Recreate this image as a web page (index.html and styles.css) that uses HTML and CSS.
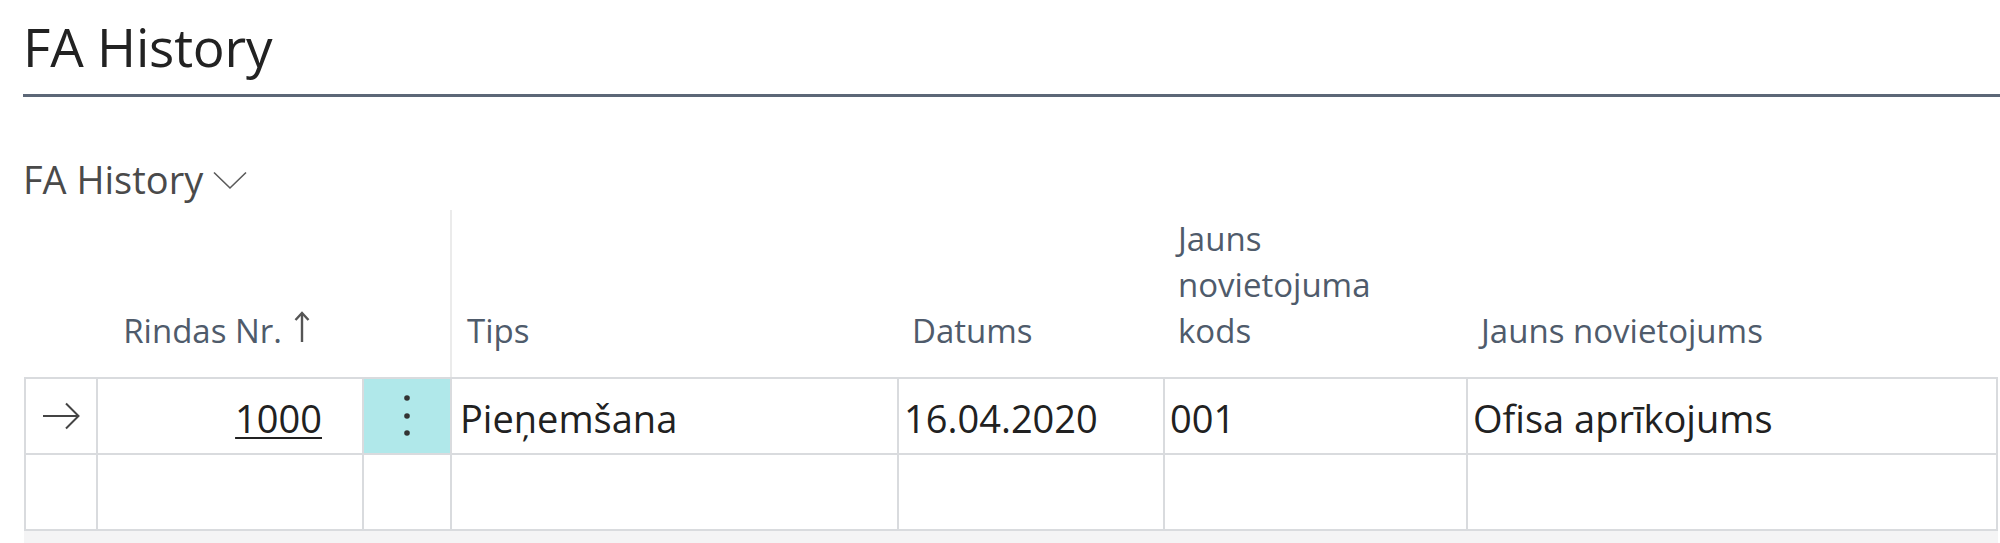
FILE: index.html
```html
<!DOCTYPE html>
<html lang="lv">
<head>
<meta charset="utf-8">
<title>FA History</title>
<link rel="stylesheet" href="styles.css">
</head>
<body>
<div class="page">
  <header class="page-header">
    <h1 class="title">FA History</h1>
  </header>

  <div class="part-title">
    <span>FA History</span>
    <svg class="chevron" width="34" height="19" viewBox="0 0 34 19"><polyline points="1,1.5 17,17 33,1.5" fill="none" stroke="#5a5a5a" stroke-width="1.6"/></svg>
  </div>

  <div class="grid">
    <div class="row head">
      <div class="hc"></div>
      <div class="hc num">Rindas Nr.<svg class="sort" width="18" height="31" viewBox="0 0 18 31"><line x1="9" y1="2" x2="9" y2="31" stroke="#555" stroke-width="2.4"/><polyline points="2.5,9 9,2 15.5,9" fill="none" stroke="#555" stroke-width="2.4"/></svg></div>
      <div class="hc"></div>
      <div class="hc sep">Tips</div>
      <div class="hc">Datums</div>
      <div class="hc"><span class="wrap">Jauns novietojuma kods</span></div>
      <div class="hc">Jauns novietojums</div>
    </div>

    <div class="row body">
      <div class="c icon"><svg width="38" height="28" viewBox="0 0 38 28"><line x1="1" y1="14" x2="36" y2="14" stroke="#444" stroke-width="2"/><polyline points="24,1.5 36.5,14 24,26.5" fill="none" stroke="#444" stroke-width="2"/></svg></div>
      <div class="c num"><a class="link">1000</a></div>
      <div class="c dots"><svg width="8" height="44" viewBox="0 0 8 44"><circle cx="4" cy="4" r="2.8" fill="#333"/><circle cx="4" cy="22" r="2.8" fill="#333"/><circle cx="4" cy="39" r="2.8" fill="#333"/></svg></div>
      <div class="c first-data">Pieņemšana</div>
      <div class="c">16.04.2020</div>
      <div class="c">001</div>
      <div class="c last">Ofisa aprīkojums</div>
    </div>

    <div class="row body final">
      <div class="c"></div>
      <div class="c"></div>
      <div class="c"></div>
      <div class="c"></div>
      <div class="c"></div>
      <div class="c"></div>
      <div class="c last"></div>
    </div>

    <div class="scroll-band"></div>
  </div>
</div>
</body>
</html>
```

FILE: styles.css
```css
html, body {
  margin: 0;
  padding: 0;
  background: #ffffff;
}

body {
  font-family: "Open Sans", "Noto Sans", Arial, sans-serif;
  color: #212121;
  overflow: hidden;
}

.page {
  padding-top: 11px;
}

.page-header {
  margin-left: 23px;
  padding-bottom: 11px;
  border-bottom: 3px solid #5c6777;
}

.title {
  margin: 0;
  font-size: 53px;
  line-height: 72px;
  font-weight: 400;
  color: #222222;
  letter-spacing: -0.2px;
}

.part-title {
  margin: 58px 0 0 23px;
  display: flex;
  align-items: center;
  font-size: 38px;
  line-height: 48px;
  color: #4a4a4a;
}

.chevron {
  margin-left: 10px;
  margin-top: 2px;
}

.grid {
  margin: 7px 2px 0 24px;
}

.row {
  display: grid;
  grid-template-columns: 72px 266px 88px 447px 266px 303px 1fr;
}

.head {
  height: 167px;
  align-items: end;
}

.hc {
  box-sizing: border-box;
  height: 100%;
  display: flex;
  align-items: flex-end;
  padding: 0 0 23px 15px;
  font-size: 33px;
  line-height: 46px;
  color: #4f5b6b;
}

.hc.num {
  justify-content: flex-end;
  padding-right: 51px;
}

.sort {
  margin-left: 11px;
  margin-bottom: 12px;
}

.hc.sep {
  border-left: 2px solid #ebebeb;
}

.wrap {
  display: block;
  max-width: 200px;
}

.c {
  box-sizing: border-box;
  height: 76px;
  border-top: 2px solid #d9dbde;
  border-left: 2px solid #d9dbde;
  padding: 4px 0 0 5px;
  font-size: 38px;
  line-height: 70px;
  color: #212121;
  white-space: nowrap;
}

.c.first-data {
  padding-left: 8px;
}

.c.last {
  border-right: 2px solid #d9dbde;
}

.final .c {
  height: 78px;
  border-bottom: 2px solid #d9dbde;
}

.c.icon {
  padding: 0;
  display: flex;
  align-items: center;
  justify-content: center;
}

.c.num {
  text-align: right;
  padding-right: 40px;
}

.link {
  color: #212121;
  text-decoration: underline;
  text-decoration-thickness: 2px;
  text-underline-offset: 4px;
}

.c.dots {
  padding: 0;
  background: #b0e8ea;
  display: flex;
  align-items: center;
  justify-content: center;
}

.scroll-band {
  height: 20px;
  background: #f4f4f5;
}
```
